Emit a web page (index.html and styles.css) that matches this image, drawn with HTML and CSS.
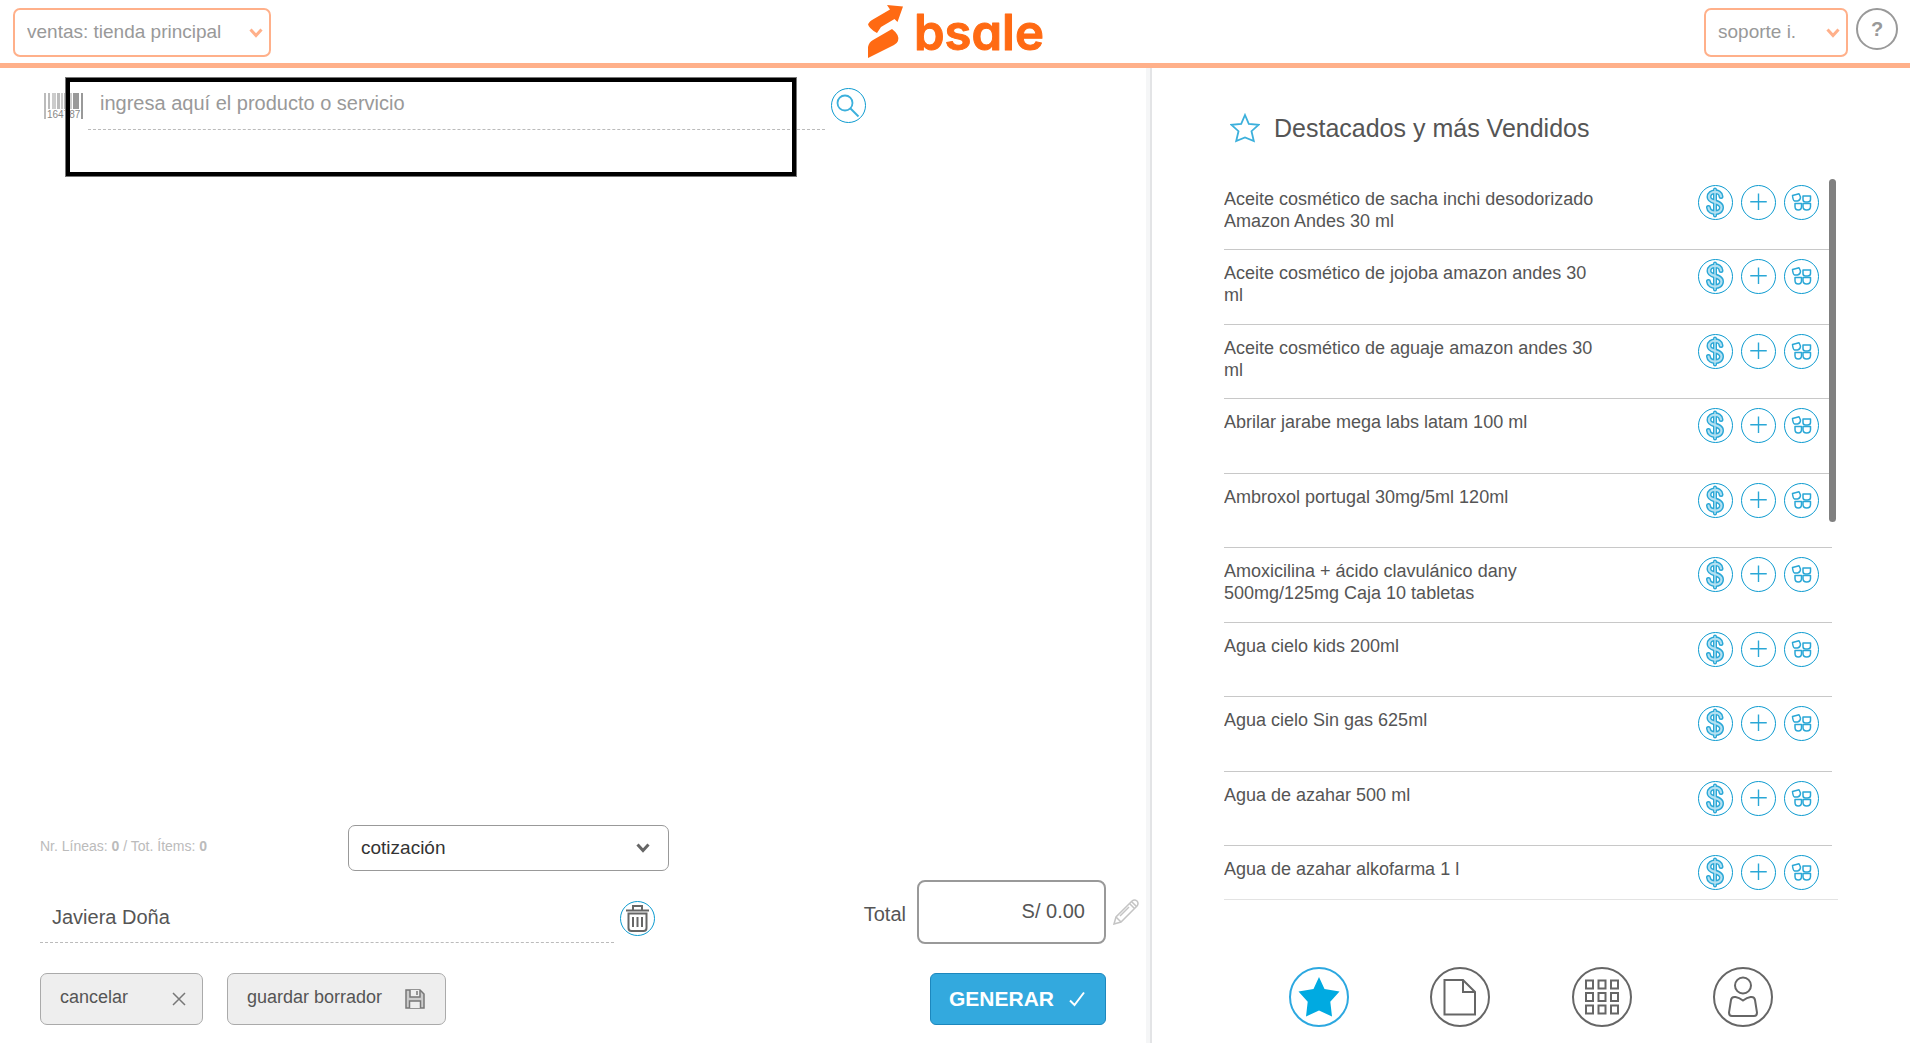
FILE: index.html
```html
<!DOCTYPE html>
<html lang="es">
<head>
    <meta charset="UTF-8">
    <meta name="viewport" content="width=device-width, initial-scale=1.0">
    <title>Bsale - Ventas</title>
    <link rel="stylesheet" href="styles.css">
</head>
<body>
    <svg class="sprite" aria-hidden="true">
        <symbol id="chevron" viewBox="0 0 14 10">
            <path d="M1.5 1.5 L7 7.5 L12.5 1.5" fill="none" stroke="currentColor" stroke-width="3"/>
        </symbol>
        <symbol id="dollar" viewBox="0 0 33 33">
            <g fill="none" stroke-linecap="round">
                <path d="M16 3.5 V29.5" stroke="currentColor" stroke-width="4"/>
                <path d="M22 10.5 C21.5 4 10 4.500 10 11 C10 17.500 22.500 14.500 22.500 21.500 C22.500 28.500 10 28 9.500 21.500" stroke="currentColor" stroke-width="5"/>
                <path d="M16 3.5 V29.5" stroke="#cdebf6" stroke-width="1.2"/>
                <path d="M22 10.5 C21.5 4 10 4.500 10 11 C10 17.500 22.500 14.500 22.500 21.500 C22.500 28.500 10 28 9.500 21.500" stroke="#b4e1f2" stroke-width="2.2"/>
            </g>
        </symbol>
        <symbol id="plus" viewBox="0 0 33 33">
            <path d="M16.500 7.500 V24 M8.250 15.750 H24.750" fill="none" stroke="currentColor" stroke-width="1.400"/>
        </symbol>
        <symbol id="pieces" viewBox="0 0 33 33">
            <g fill="none" stroke="currentColor" stroke-width="1.500" stroke-linejoin="round">
                <path d="M7.500 9.500 L14 7.800 L15.500 11 Q15.500 14.500 12.500 15 L9.500 15 Q8 14.500 7.500 9.500 Z"/>
                <path d="M18 10 H25.500 V13.500 Q25.500 16 22.500 16 H20.500 Q18 16 18 13.500 Z"/>
                <path d="M10 17.500 H16.500 V20.500 Q16.500 24 13.300 24 Q10 24 10 20.500 Z"/>
                <path d="M18 17.500 H25.500 V20.500 Q25.500 24 21.700 24 Q18 24 18 20.500 Z"/>
            </g>
        </symbol>
    </svg>

    <header class="topbar">
        <div class="select-box select-store">
            <select aria-label="Módulo y tienda">
                <option>ventas: tienda principal</option>
            </select>
            <svg class="chevron"><use href="#chevron"/></svg>
        </div>
        <a class="logo" href="#" aria-label="bsale">
            <svg viewBox="0 0 176 56">
                <path d="M0 27 V22 Q0 18.500 4 16 L22 5.500 L19 1 L35 2.500 L29.500 18 L26.500 15 L13 23 L9 29 Q0 24 0 19 Z"/>
                <path d="M0 54 V43 Q1 38 5 36 L24 25 Q32 31 30 37 Q29 39.500 26 41 Z"/>
                <text x="46" y="46">bsale</text>
            </svg>
        </a>
        <div class="topbar-user">
            <div class="select-box select-user">
                <select aria-label="Usuario">
                    <option>soporte i.</option>
                </select>
                <svg class="chevron"><use href="#chevron"/></svg>
            </div>
            <button class="help" type="button">?</button>
        </div>
    </header>

    <main class="content">
        <section class="sale">
            <div class="search">
                <svg class="barcode" viewBox="0 0 39 26">
                    <g fill="#bbb">
                        <path d="M0 0h2v26h-2z M4 0h2v16h-2z M13 0h3v16h-3z M20 0h1v16h-1z"/>
                        <path d="M8 0h4v16h-4z M17 0h2v16h-2z M25 0h3v16h-3z M33 0h2v16h-2z" fill="#ccc"/>
                        <path d="M22 0h3v16h-3z M29 0h6v16h-6z M37 0h2v26h-2z" fill="#999"/>
                    </g>
                    <text x="3" y="25">164787</text>
                </svg>
                <input class="search-input" type="text" aria-label="Producto o servicio" placeholder="ingresa aquí el producto o servicio">
                <button class="round" type="button" aria-label="Buscar">
                    <svg viewBox="0 0 33 33" fill="none" stroke="#3cb0dc">
                        <circle cx="13" cy="14" r="7.500" stroke-width="1.800"/>
                        <path d="M18.500 19.500 L26.500 27.500" stroke-width="2"/>
                    </svg>
                </button>
                <div class="highlight"></div>
            </div>

            <div class="sale-footer">
                <div class="sale-left">
                    <div class="document">
                        <p class="counts">Nr. Líneas: <b>0</b> / Tot. Ítems: <b>0</b></p>
                        <div class="select-box select-document">
                            <select aria-label="Tipo de documento">
                                <option>cotización</option>
                            </select>
                            <svg class="chevron"><use href="#chevron"/></svg>
                        </div>
                    </div>
                    <div class="client">
                        <input class="client-input" type="text" aria-label="Cliente" value="Javiera Doña">
                        <button class="round trash" type="button" aria-label="Quitar cliente">
                            <svg viewBox="0 0 33 33" fill="none" stroke="#666" stroke-width="2">
                                <path d="M5 8.500 H28 M12 8 V4 H21 V8"/>
                                <path d="M7.500 11.500 H25.500 V26 Q25.500 29 22.500 29 H10.500 Q7.500 29 7.500 26 Z"/>
                                <path d="M12 15 V25 M16.500 15 V25 M21 15 V25"/>
                            </svg>
                        </button>
                    </div>
                    <div class="actions">
                        <button class="btn btn-cancel" type="button">cancelar
                            <svg viewBox="0 0 14 14"><path d="M1 1 L13 13 M13 1 L1 13" fill="none" stroke="#777" stroke-width="1.500"/></svg>
                        </button>
                        <button class="btn btn-draft" type="button">guardar borrador
                            <svg viewBox="0 0 20 20" fill="none" stroke="#777" stroke-width="1.500">
                                <path d="M1 1 H15 L19 5 V19 H1 Z" fill="#ccc"/>
                                <path d="M5 1 V8 H15 V1 M4.500 19 V12 H15.500 V19" fill="#eee"/>
                                <path d="M12 2 V6"/>
                            </svg>
                        </button>
                    </div>
                </div>

                <div class="sale-right">
                    <div class="total">
                        <label for="total">Total</label>
                        <input id="total" type="text" value="S/ 0.00" readonly>
                        <button class="edit" type="button" aria-label="Editar total">
                            <svg viewBox="0 0 26 26" fill="none" stroke="#c4c4c4" stroke-width="1.500">
                                <path d="M1 25 L3 18 L19 2 Q21.500 0 24 2 Q26 4.500 24 7 L8 23 Z"/>
                                <path d="M3 18 L8 23 M16.500 4.500 L21.500 9.500 M18.500 2.500 L23.500 7.500 M16 8 L7 17"/>
                            </svg>
                        </button>
                    </div>
                    <button class="generate" type="button">GENERAR
                        <svg viewBox="0 0 16 16"><path d="M1 9.500 L5.500 14 L15 1.500" fill="none" stroke="#fff" stroke-width="2"/></svg>
                    </button>
                </div>
            </div>
        </section>

        <aside class="catalog">
            <h2 class="catalog-title">
                <svg viewBox="0 0 30 30"><path d="M15 2 L18.800 10.800 L28.500 11.800 L21.500 18.200 L23.800 28 L15 24.500 L6.200 28 L8.500 18.200 L1.500 11.800 L11.200 10.800 Z" fill="none" stroke="#3cb0dc" stroke-width="1.800"/></svg>
                Destacados y más Vendidos
            </h2>

            <div class="products">
                <ul class="product-list">
                    <li>
                        <span class="name">Aceite cosmético de sacha inchi desodorizado Amazon Andes 30 ml</span>
                        <button class="round" type="button" aria-label="Precio"><svg><use href="#dollar"/></svg></button>
                        <button class="round" type="button" aria-label="Agregar"><svg><use href="#plus"/></svg></button>
                        <button class="round" type="button" aria-label="Stock"><svg><use href="#pieces"/></svg></button>
                    </li>
                    <li>
                        <span class="name">Aceite cosmético de jojoba amazon andes 30 ml</span>
                        <button class="round" type="button" aria-label="Precio"><svg><use href="#dollar"/></svg></button>
                        <button class="round" type="button" aria-label="Agregar"><svg><use href="#plus"/></svg></button>
                        <button class="round" type="button" aria-label="Stock"><svg><use href="#pieces"/></svg></button>
                    </li>
                    <li>
                        <span class="name">Aceite cosmético de aguaje amazon andes 30 ml</span>
                        <button class="round" type="button" aria-label="Precio"><svg><use href="#dollar"/></svg></button>
                        <button class="round" type="button" aria-label="Agregar"><svg><use href="#plus"/></svg></button>
                        <button class="round" type="button" aria-label="Stock"><svg><use href="#pieces"/></svg></button>
                    </li>
                    <li>
                        <span class="name">Abrilar jarabe mega labs latam 100 ml</span>
                        <button class="round" type="button" aria-label="Precio"><svg><use href="#dollar"/></svg></button>
                        <button class="round" type="button" aria-label="Agregar"><svg><use href="#plus"/></svg></button>
                        <button class="round" type="button" aria-label="Stock"><svg><use href="#pieces"/></svg></button>
                    </li>
                    <li>
                        <span class="name">Ambroxol portugal 30mg/5ml 120ml</span>
                        <button class="round" type="button" aria-label="Precio"><svg><use href="#dollar"/></svg></button>
                        <button class="round" type="button" aria-label="Agregar"><svg><use href="#plus"/></svg></button>
                        <button class="round" type="button" aria-label="Stock"><svg><use href="#pieces"/></svg></button>
                    </li>
                    <li>
                        <span class="name">Amoxicilina + ácido clavulánico dany 500mg/125mg Caja 10 tabletas</span>
                        <button class="round" type="button" aria-label="Precio"><svg><use href="#dollar"/></svg></button>
                        <button class="round" type="button" aria-label="Agregar"><svg><use href="#plus"/></svg></button>
                        <button class="round" type="button" aria-label="Stock"><svg><use href="#pieces"/></svg></button>
                    </li>
                    <li>
                        <span class="name">Agua cielo kids 200ml</span>
                        <button class="round" type="button" aria-label="Precio"><svg><use href="#dollar"/></svg></button>
                        <button class="round" type="button" aria-label="Agregar"><svg><use href="#plus"/></svg></button>
                        <button class="round" type="button" aria-label="Stock"><svg><use href="#pieces"/></svg></button>
                    </li>
                    <li>
                        <span class="name">Agua cielo Sin gas 625ml</span>
                        <button class="round" type="button" aria-label="Precio"><svg><use href="#dollar"/></svg></button>
                        <button class="round" type="button" aria-label="Agregar"><svg><use href="#plus"/></svg></button>
                        <button class="round" type="button" aria-label="Stock"><svg><use href="#pieces"/></svg></button>
                    </li>
                    <li>
                        <span class="name">Agua de azahar 500 ml</span>
                        <button class="round" type="button" aria-label="Precio"><svg><use href="#dollar"/></svg></button>
                        <button class="round" type="button" aria-label="Agregar"><svg><use href="#plus"/></svg></button>
                        <button class="round" type="button" aria-label="Stock"><svg><use href="#pieces"/></svg></button>
                    </li>
                    <li>
                        <span class="name">Agua de azahar alkofarma 1 l</span>
                        <button class="round" type="button" aria-label="Precio"><svg><use href="#dollar"/></svg></button>
                        <button class="round" type="button" aria-label="Agregar"><svg><use href="#plus"/></svg></button>
                        <button class="round" type="button" aria-label="Stock"><svg><use href="#pieces"/></svg></button>
                    </li>
                </ul>
                <div class="scroll-thumb"></div>
            </div>

            <nav class="tabs">
                <a class="tab active" href="#" aria-label="Destacados">
                    <svg viewBox="0 0 56 56"><path d="M28 8 L33.500 20 L48.500 22.500 L39.300 32.700 L41 47.500 L28 41.500 L15 47.500 L16.700 32.700 L7.500 22.500 L22.500 20 Z"/></svg>
                </a>
                <a class="tab" href="#" aria-label="Documentos">
                    <svg viewBox="0 0 56 56"><path d="M12.500 11 H31 L43 23 V45.500 H12.500 Z M31 11 V23 H43"/></svg>
                </a>
                <a class="tab" href="#" aria-label="Categorías">
                    <svg viewBox="0 0 56 56">
                        <path d="M12 11.500h7v8h-7z M24.500 11.500h7v8h-7z M37 11.500h7v8h-7z M12 24h7v8h-7z M24.500 24h7v8h-7z M37 24h7v8h-7z M12 36.500h7v8h-7z M24.500 36.500h7v8h-7z M37 36.500h7v8h-7z"/>
                    </svg>
                </a>
                <a class="tab" href="#" aria-label="Clientes">
                    <svg viewBox="0 0 56 56">
                        <circle cx="28" cy="16.500" r="8"/>
                        <path d="M20.500 28 Q24 28.500 28 31.500 Q32 28.500 35.500 28 Q39.500 27.500 40 31 L42 43.500 Q42 47 39 47 H17 Q14 47 14 43.500 L16 31 Q16.500 27.500 20.500 28 Z"/>
                    </svg>
                </a>
            </nav>
        </aside>
    </main>
</body>
</html>
```
FILE: styles.css
```css
* {
    box-sizing: border-box;
}
body {
    display: flex;
    flex-direction: column;
    height: 100vh;
    margin: 0;
    font-family: "Liberation Sans", Arial, sans-serif;
    font-size: 18px;
    color: #555;
    background-color: white;
}
button, input, select {
    font-family: inherit;
    font-size: inherit;
    color: inherit;
}
button {
    padding: 0;
    cursor: pointer;
}
.sprite {
    display: none;
}

/* top bar */
.topbar {
    display: grid;
    grid-template-columns: 1fr auto 1fr;
    align-items: start;
    height: 68px;
    padding: 8px 12px 0 13px;
    border-bottom: 5px solid #ffb08a;
    color: #999;
}
.topbar-user {
    display: flex;
    justify-content: flex-end;
    gap: 8px;
}
.select-box {
    position: relative;
    height: 49px;
    color: #ffb08a;
}
.select-box select {
    width: 100%;
    height: 100%;
    padding: 0 12px 2px;
    border: 2px solid #ffb08a;
    border-radius: 7px;
    background-color: white;
    color: #999;
    font-size: 19px;
    appearance: none;
}
.select-store {
    width: 258px;
}
.select-user {
    width: 144px;
}
.chevron {
    position: absolute;
    top: 50%;
    right: 8px;
    width: 14px;
    height: 10px;
    margin-top: -5px;
    pointer-events: none;
}
.logo svg {
    display: block;
    width: 176px;
    height: 56px;
    margin-top: -4px;
    fill: #ff6a13;
    overflow: visible;
}
.logo text {
    font-family: Inter, sans-serif;
    font-size: 49px;
    font-weight: 600;
    font-feature-settings: "cv11";
    stroke: #ff6a13;
    stroke-width: 1px;
    stroke-linejoin: round;
}
.help {
    width: 42px;
    height: 42px;
    border: 2px solid #999;
    border-radius: 50%;
    background: none;
    font-size: 20px;
    font-weight: bold;
}

/* sale */
.content {
    display: flex;
    flex: 1;
    min-height: 0;
}
.sale {
    display: flex;
    flex-direction: column;
    justify-content: space-between;
    width: 60%;
    padding: 9px 0 18px 40px;
}
.search {
    position: relative;
    display: flex;
    align-items: flex-start;
    padding: 0 280px 0 4px;
}
.barcode {
    width: 39px;
    height: 26px;
    margin: 16px 5px 0 0;
}
.barcode text {
    font-size: 10px;
    fill: #888;
}
.search-input, .client-input {
    flex: 1;
    min-width: 0;
    border: none;
    border-bottom: 1px dashed #bbb;
    background: none;
    padding: 0 12px;
    font-size: 20px;
}
.search-input {
    height: 53px;
    margin-right: 6px;
}
.search-input::placeholder {
    color: #999;
}
.round {
    flex: none;
    width: 35px;
    height: 35px;
    border: 1px solid #0d9bd0;
    border-radius: 50%;
    background-color: white;
    color: #2aa7d6;
}
.round svg {
    display: block;
    width: 33px;
    height: 33px;
}
.search .round {
    margin-top: 11px;
}
.highlight {
    position: absolute;
    top: 0;
    left: 25px;
    width: 732px;
    height: 100px;
    border: 5px solid black;
    outline: 1px solid #777;
    outline-offset: -1px;
    pointer-events: none;
}
.sale-footer {
    display: flex;
    justify-content: space-between;
    align-items: flex-end;
}
.sale-left {
    display: flex;
    flex-direction: column;
    gap: 30px;
    width: 629px;
}
.document {
    display: flex;
    align-items: center;
    justify-content: space-between;
}
.counts {
    margin: 0;
    padding-bottom: 4px;
    font-size: 14px;
    color: #bbb;
}
.select-document {
    width: 321px;
    height: 46px;
    color: #666;
}
.select-document select {
    border: 1px solid #999;
    color: #333;
}
.select-document .chevron {
    right: 19px;
}
.client {
    display: flex;
    gap: 6px;
    padding-right: 14px;
}
.client-input {
    height: 42px;
    padding-bottom: 8px;
}
.actions {
    display: flex;
    gap: 24px;
}
.btn {
    display: flex;
    align-items: center;
    justify-content: space-between;
    height: 52px;
    padding: 0 16px 4px 19px;
    border: 1px solid #aaa;
    border-radius: 7px;
    background-color: #eee;
}
.btn-cancel {
    width: 163px;
}
.btn-draft {
    width: 219px;
    padding-right: 20px;
}
.btn svg {
    height: 14px;
    margin-top: 4px;
}
.btn-draft svg {
    height: 20px;
}
.sale-right {
    display: flex;
    flex-direction: column;
    align-items: flex-end;
    gap: 29px;
    padding-right: 7px;
}
.total {
    display: flex;
    align-items: center;
    font-size: 20px;
}
.total label {
    padding-top: 4px;
}
.total input {
    width: 189px;
    height: 64px;
    margin: 0 7px 0 11px;
    padding: 0 19px 2px;
    border: 2px solid #999;
    border-radius: 8px;
    text-align: right;
}
.edit {
    border: none;
    background: none;
}
.edit svg {
    display: block;
    width: 26px;
    height: 26px;
}
.generate {
    display: flex;
    align-items: center;
    justify-content: space-between;
    width: 176px;
    height: 52px;
    margin-right: 33px;
    padding: 0 20px 0 18px;
    border: 1px solid #1d87bd;
    border-radius: 6px;
    background-color: #33a9de;
    color: white;
    font-size: 21px;
    font-weight: bold;
}
.generate svg {
    width: 16px;
    height: 16px;
}

/* catalog */
.catalog {
    display: flex;
    flex: 1;
    flex-direction: column;
    padding: 0 72px 0 74px;
    border-left: 4px solid #f5f6f7;
    box-shadow: inset 2px 0 #e3e4e6;
}
.catalog-title {
    display: flex;
    align-items: center;
    gap: 14px;
    height: 108px;
    margin: 0;
    padding: 12px 0 0 6px;
    font-size: 25px;
    font-weight: normal;
}
.catalog-title svg {
    width: 30px;
    height: 30px;
}
.products {
    position: relative;
    flex: 1;
    overflow: hidden;
    padding-right: 6px;
    border-bottom: 1px solid #e3e3e3;
}
.product-list {
    display: grid;
    grid-auto-rows: 74px 75px;
    margin: 0;
    padding: 0;
    list-style: none;
}
.product-list li {
    display: flex;
    gap: 8px;
    padding: 9px 13px 0 0;
    border-bottom: 1px solid #c8c8c8;
}
.name {
    max-width: 375px;
    margin-right: auto;
    padding-top: 3px;
    line-height: 22px;
}
.scroll-thumb {
    position: absolute;
    top: 3px;
    right: 2px;
    width: 7px;
    height: 343px;
    border-radius: 4px;
    background-color: #808080;
}
.tabs {
    display: flex;
    justify-content: space-between;
    padding: 67px 65px 16px;
}
.tab {
    width: 60px;
    height: 60px;
    border: 2px solid #666;
    border-radius: 50%;
}
.tab svg {
    display: block;
    fill: none;
    stroke: #666;
    stroke-width: 2px;
}
.tab.active {
    border-color: #2ca8e0;
}
.tab.active svg {
    fill: #00aae1;
    stroke: none;
}
```
